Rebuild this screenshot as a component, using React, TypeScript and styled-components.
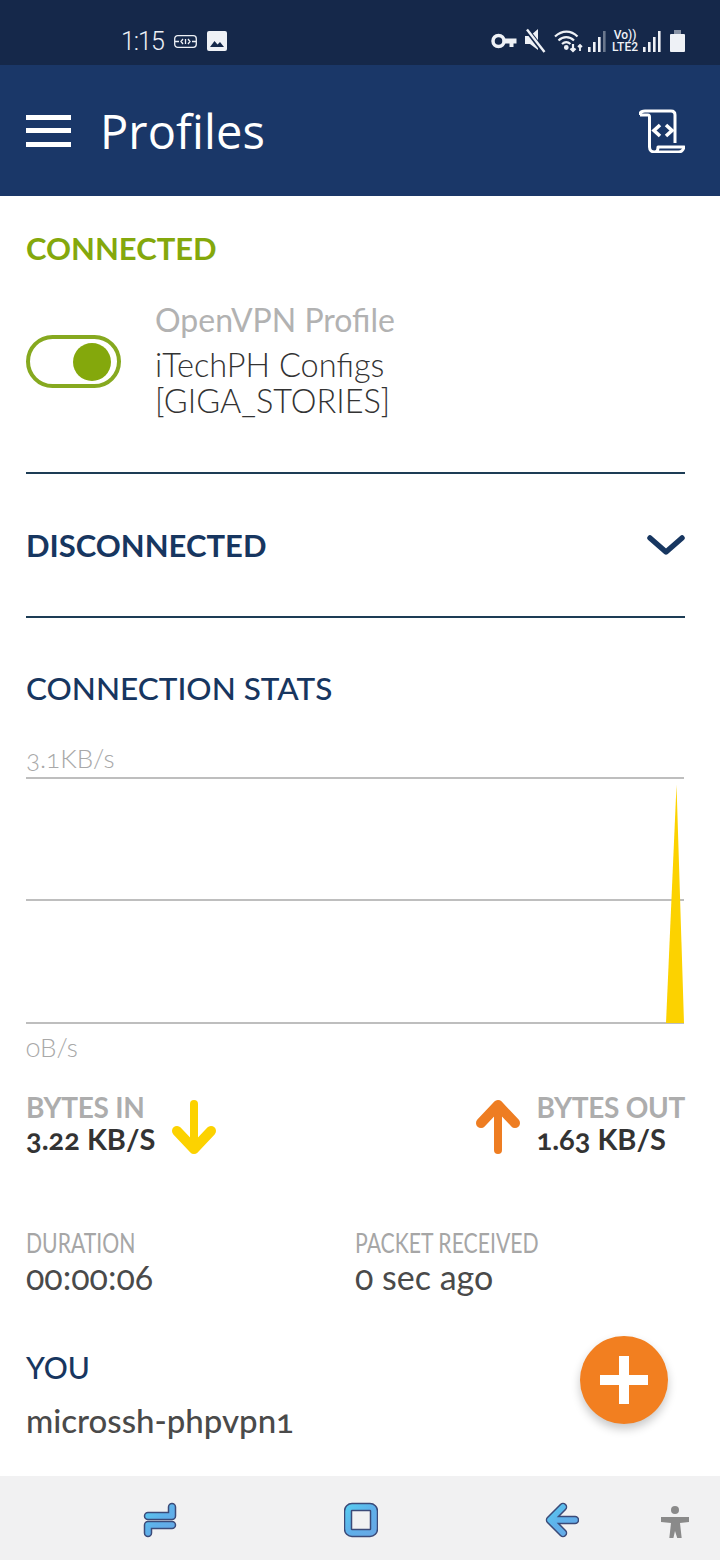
import React from "react";
import styled, { createGlobalStyle } from "styled-components";

const GlobalStyle = createGlobalStyle`
  html, body {
    margin: 0;
    padding: 0;
    background: #ffffff;
  }
  * {
    box-sizing: border-box;
  }
`;

const Page = styled.div`
  width: 720px;
  height: 1560px;
  display: flex;
  flex-direction: column;
  position: relative;
  overflow: hidden;
  background: #ffffff;
  font-family: Lato, "Open Sans", sans-serif;
  font-variant-numeric: oldstyle-nums;
`;

const StatusBar = styled.div`
  height: 65px;
  flex: none;
  display: flex;
  align-items: center;
  padding: 17px 35px 0 121px;
  background: #15284a;
  color: #eef1f6;
`;

const Clock = styled.span`
  font-family: Roboto, sans-serif;
  font-size: 25px;
  font-weight: 300;
  letter-spacing: -1px;
  font-variant-numeric: lining-nums;
`;

const StatusLeft = styled.div`
  display: flex;
  align-items: center;
  gap: 10px;
`;

const StatusRight = styled.div`
  margin-left: auto;
  display: flex;
  align-items: center;
`;

const StatusSlot = styled.span<{ $before: number }>`
  display: flex;
  margin-left: ${(p) => p.$before}px;
`;

const VolteText = styled.span`
  font-family: Roboto, sans-serif;
  font-size: 12px;
  line-height: 12px;
  font-weight: 500;
  text-align: center;
  font-variant-numeric: lining-nums;
`;

const Toolbar = styled.div`
  height: 131px;
  flex: none;
  display: flex;
  align-items: center;
  padding: 0 35px 0 26px;
  background: #1a3768;
  color: #ffffff;
`;

const Burger = styled.div`
  width: 45px;
  height: 32px;
  display: flex;
  flex-direction: column;
  justify-content: space-between;
  margin-right: 29px;
  span {
    height: 5px;
    background: #ffffff;
  }
`;

const Title = styled.h1`
  margin: 0;
  font-family: "Open Sans", sans-serif;
  font-size: 47px;
  font-weight: 500;
  letter-spacing: 0.1px;
`;

const ToolbarAction = styled.div`
  margin-left: auto;
  display: flex;
`;

const Content = styled.main`
  flex: 1;
  padding: 0 35px 0 26px;
  display: flex;
  flex-direction: column;
`;

const ConnectedHead = styled.h2`
  margin: 34px 0 36px;
  font-size: 31px;
  line-height: 36px;
  font-weight: 700;
  color: #84a80c;
`;

const ProfileRow = styled.div`
  display: flex;
  align-items: center;
`;

const Toggle = styled.div`
  width: 95px;
  height: 53px;
  flex: none;
  margin: 2px 35px 0 0;
  border: 4px solid #86a91f;
  border-radius: 27px;
  display: flex;
  align-items: center;
  justify-content: flex-end;
  padding-right: 6px;
`;

const ToggleKnob = styled.div`
  width: 38px;
  height: 38px;
  border-radius: 50%;
  background: #84a80c;
`;

const ProfileText = styled.div`
  display: flex;
  flex-direction: column;
  margin-left: -1px;
`;

const ProfileType = styled.div`
  font-size: 32px;
  line-height: 36px;
  font-weight: 400;
  color: #b2b2b2;
  margin-bottom: 9px;
`;

const ProfileName = styled.div`
  font-size: 32.5px;
  line-height: 36px;
  font-weight: 300;
  color: #333333;
`;

const Divider = styled.div<{ $top: number }>`
  height: 2px;
  flex: none;
  margin-top: ${(p) => p.$top}px;
  background: #1d3c55;
`;

const CollapseRow = styled.div`
  height: 142px;
  flex: none;
  display: flex;
  align-items: center;
  justify-content: space-between;
`;

const NavyHead = styled.h2`
  margin: 0;
  font-size: 31px;
  line-height: 36px;
  font-weight: 700;
  color: #173660;
`;

const StatsHead = styled.h3`
  margin: 52px 0 0;
  font-size: 31.500px;
  line-height: 36px;
  font-weight: 500;
  color: #173660;
`;

const AxisLabel = styled.div<{ $top: number }>`
  margin-top: ${(p) => p.$top}px;
  font-size: 26px;
  line-height: 28px;
  font-weight: 300;
  color: #a8a8a8;
`;

const Chart = styled.svg`
  display: block;
  width: 659px;
  height: 247px;
  flex: none;
  margin-top: 5px;
`;

const RateRow = styled.div`
  margin-top: 30px;
  display: flex;
  justify-content: space-between;
`;

const RateGroup = styled.div`
  display: flex;
  align-items: center;
  gap: 17px;
`;

const RateArrow = styled.svg`
  display: block;
  width: 44px;
  height: 54px;
  flex: none;
  margin-top: 8px;
`;

const RateLabel = styled.div`
  font-size: 28px;
  line-height: 32px;
  font-weight: 700;
  letter-spacing: -0.3px;
  color: #adadad;
`;

const RateValue = styled.div`
  font-size: 29px;
  line-height: 32px;
  font-weight: 700;
  color: #333333;
`;

const InfoRow = styled.div`
  margin-top: 72px;
  display: flex;
`;

const InfoCell = styled.div`
  width: 329px;
`;

const InfoLabel = styled.div`
  font-size: 27px;
  line-height: 32px;
  font-weight: 400;
  color: #a6a6a6;
  white-space: nowrap;
  transform: scaleX(0.785);
  transform-origin: left center;
`;

const InfoValue = styled.div`
  font-size: 34px;
  line-height: 36px;
  font-weight: 400;
  color: #4a4a4a;
`;

const YouHead = styled.h3`
  margin: 54px 0 0;
  font-size: 30px;
  line-height: 36px;
  font-weight: 500;
  color: #173660;
`;

const HostName = styled.div`
  margin-top: 17px;
  font-size: 33px;
  line-height: 36px;
  font-weight: 500;
  color: #4a4a4a;
`;

const Fab = styled.div`
  position: absolute;
  left: 580px;
  top: 1336px;
  width: 88px;
  height: 88px;
  border-radius: 50%;
  background: #f27f20;
  box-shadow: 0 5px 10px rgba(0, 0, 0, 0.22);
  display: flex;
  align-items: center;
  justify-content: center;
`;

const BottomNav = styled.nav`
  height: 84px;
  flex: none;
  display: flex;
  align-items: center;
  gap: 167px;
  padding: 4px 0 0 143px;
  background: #f1f1f2;
`;

const NavIcon = styled.svg<{ $shift?: number }>`
  display: block;
  width: 34px;
  height: 36px;
  flex: none;
  margin-left: ${(p) => p.$shift ?? 0}px;
`;

const KeyIcon = () => (
  <svg width="26" height="18" viewBox="0 0 26 18" fill="none">
    <circle cx="7.500" cy="9" r="5.500" stroke="#eef1f6" strokeWidth="3.500" />
    <path d="M13 6.500h12.500v5h-3v3.500h-4v-3.500H13z" fill="#eef1f6" />
  </svg>
);

const MuteIcon = () => (
  <svg width="22" height="26" viewBox="0 0 22 26">
    <path d="M1 8h5l8-7v21l-8-6H1z" fill="#eef1f6" />
    <path d="M3 2l17 22" stroke="#15284a" strokeWidth="5" />
    <path d="M3 1.500l17.500 22.500" stroke="#eef1f6" strokeWidth="2.400" />
  </svg>
);

const WifiIcon = () => (
  <svg width="29" height="24" viewBox="0 0 29 24" fill="none" stroke="#eef1f6" strokeWidth="2.200">
    <path d="M1 7.500C8 1 17 1 23.500 7.500" />
    <path d="M4.500 11.500C9 7 15.500 7 20 11.500" />
    <path d="M8 15c3-2.600 5.500-2.600 8.500 0" />
    <circle cx="12.300" cy="18.500" r="1.300" fill="#eef1f6" />
    <path d="M19 15v7M16.500 19.500l2.500 2.500 2.500-2.500" />
    <path d="M26 22v-6M24 18l2-2 2 2" strokeWidth="1.800" />
  </svg>
);

const SignalIcon = ({ dim }: { dim?: boolean }) => (
  <svg width="18" height="21" viewBox="0 0 18 21" fill="#eef1f6">
    <rect x="0" y="16" width="2.600" height="5" />
    <rect x="5" y="11" width="2.600" height="10" />
    <rect x="10" y="6" width="2.600" height="15" />
    <rect x="15" y="0" width="2.600" height="21" opacity={dim ? 0.4 : 1} />
  </svg>
);

const BatteryIcon = () => (
  <svg width="15" height="22" viewBox="0 0 15 22">
    <rect x="4" y="0" width="7" height="4" fill="#8893a6" />
    <rect x="0" y="4" width="15" height="18" rx="1" fill="#eef1f6" />
  </svg>
);

const ScrollIcon = () => (
  <svg width="46" height="44" viewBox="0 0 46 44" fill="none" stroke="#ffffff" strokeWidth="3" strokeLinejoin="round">
    <path d="M1 6c0-3 2-4 5-4h26c3 0 4 2 4 4v28" />
    <path d="M1 6h8c1 0 1.500 1 1.500 2v30c0 3 2 5 5 5h24c3 0 5-2.500 5.500-5H19c0 3-1 5-3.500 5" />
    <path d="M21 16l-6 5.500 6 5.500M27 16l6 5.500-6 5.500" strokeWidth="3.600" strokeLinejoin="miter" />
  </svg>
);

const NavStroke = ({ d }: { d: string }) => (
  <>
    <path d={d} stroke="#3b4a78" strokeWidth="8.500" strokeLinecap="round" strokeLinejoin="round" fill="none" />
    <path d={d} stroke="url(#navBlue)" strokeWidth="5.500" strokeLinecap="round" strokeLinejoin="round" fill="none" />
  </>
);

export default function App() {
  return (
    <Page>
      <GlobalStyle />
      <StatusBar>
        <StatusLeft>
          <Clock>1:15</Clock>
          <svg width="23" height="13" viewBox="0 0 23 13" fill="none" stroke="#eef1f6" strokeWidth="1.300">
            <rect x="0.700" y="0.700" width="21.600" height="11.600" rx="3" />
            <path d="M1 6.500h4M18 6.500h4M9 4L7 6.500 9 9M14 4l2 2.500L14 9M11.500 4v5" />
          </svg>
          <svg width="20" height="20" viewBox="0 0 20 20">
            <rect width="20" height="20" rx="2" fill="#eef1f6" />
            <path d="M3 16l4.500-6 3 3.500 2.500-2.500 4 5z" fill="#15284a" />
          </svg>
        </StatusLeft>
        <StatusRight>
          <StatusSlot $before={0}>
            <KeyIcon />
          </StatusSlot>
          <StatusSlot $before={7}>
            <MuteIcon />
          </StatusSlot>
          <StatusSlot $before={8}>
            <WifiIcon />
          </StatusSlot>
          <StatusSlot $before={5}>
            <SignalIcon dim />
          </StatusSlot>
          <StatusSlot $before={6}>
            <VolteText>
              Vo))
              <br />
              LTE2
            </VolteText>
          </StatusSlot>
          <StatusSlot $before={5}>
            <SignalIcon />
          </StatusSlot>
          <StatusSlot $before={9}>
            <BatteryIcon />
          </StatusSlot>
        </StatusRight>
      </StatusBar>

      <Toolbar>
        <Burger>
          <span />
          <span />
          <span />
        </Burger>
        <Title>Profiles</Title>
        <ToolbarAction>
          <ScrollIcon />
        </ToolbarAction>
      </Toolbar>

      <Content>
        <ConnectedHead>CONNECTED</ConnectedHead>
        <ProfileRow>
          <Toggle>
            <ToggleKnob />
          </Toggle>
          <ProfileText>
            <ProfileType>OpenVPN Profile</ProfileType>
            <ProfileName>
              iTechPH Configs
              <br />
              [GIGA_STORIES]
            </ProfileName>
          </ProfileText>
        </ProfileRow>
        <Divider $top={53} />
        <CollapseRow>
          <NavyHead>DISCONNECTED</NavyHead>
          <svg width="38" height="22" viewBox="0 0 38 22" fill="none" stroke="#173660" strokeWidth="5.500" strokeLinecap="round" strokeLinejoin="round">
            <path d="M3 4L19 18 35 4" />
          </svg>
        </CollapseRow>
        <Divider $top={0} />
        <StatsHead>CONNECTION STATS</StatsHead>
        <AxisLabel $top={38}>3.1KB/s</AxisLabel>
        <Chart viewBox="0 0 659 247">
          <path d="M0 1h658M0 123h658M0 246h658" stroke="#a9a9a9" strokeWidth="1.600" fill="none" />
          <path d="M640 246L650.500 8 658 246z" fill="#fcd200" />
        </Chart>
        <AxisLabel $top={9}>0B/s</AxisLabel>
        <RateRow>
          <RateGroup>
            <div>
              <RateLabel>BYTES IN</RateLabel>
              <RateValue>3.22 KB/S</RateValue>
            </div>
            <RateArrow viewBox="0 0 44 54" fill="none" stroke="#fcd200" strokeLinecap="round" strokeLinejoin="round">
              <path d="M22 4v44" strokeWidth="8" />
              <path d="M5 31l17 18 17-18" strokeWidth="10" />
            </RateArrow>
          </RateGroup>
          <RateGroup>
            <RateArrow viewBox="0 0 44 54" fill="none" stroke="#ee7d22" strokeLinecap="round" strokeLinejoin="round">
              <path d="M22 50V6" strokeWidth="8" />
              <path d="M5 23L22 5l17 18" strokeWidth="10" />
            </RateArrow>
            <div>
              <RateLabel>BYTES OUT</RateLabel>
              <RateValue>1.63 KB/S</RateValue>
            </div>
          </RateGroup>
        </RateRow>
        <InfoRow>
          <InfoCell>
            <InfoLabel>DURATION</InfoLabel>
            <InfoValue>00:00:06</InfoValue>
          </InfoCell>
          <InfoCell>
            <InfoLabel>PACKET RECEIVED</InfoLabel>
            <InfoValue>0 sec ago</InfoValue>
          </InfoCell>
        </InfoRow>
        <YouHead>YOU</YouHead>
        <HostName>microssh-phpvpn1</HostName>
      </Content>

      <Fab>
        <svg width="48" height="48" viewBox="0 0 48 48" fill="#ffffff">
          <path d="M19 0h10v19h19v10H29v19H19V29H0V19h19z" />
        </svg>
      </Fab>

      <BottomNav>
        <NavIcon viewBox="0 0 34 36" fill="none">
          <defs>
            <linearGradient id="navBlue" gradientUnits="userSpaceOnUse" x1="0" y1="0" x2="34" y2="36">
              <stop offset="0" stopColor="#55d2f2" />
              <stop offset="0.500" stopColor="#5fb0ea" />
              <stop offset="1" stopColor="#6aa6e4" />
            </linearGradient>
          </defs>
          <NavStroke d="M29 5v9H5" />
          <NavStroke d="M29 23H5v8" />
        </NavIcon>
        <NavIcon viewBox="0 0 34 36" fill="none">
          <NavStroke d="M8 5h18a4 4 0 0 1 4 4v18a4 4 0 0 1-4 4H8a4 4 0 0 1-4-4V9a4 4 0 0 1 4-4z" />
        </NavIcon>
        <NavIcon viewBox="0 0 34 36" fill="none">
          <NavStroke d="M18 5L5 18l13 13M5 18h25" />
        </NavIcon>
        <NavIcon viewBox="0 0 34 36" fill="#8a8a8a" $shift={-88}>
          <circle cx="17" cy="8" r="4" />
          <path d="M3 15h28v5l-9 1 2 18-3.500 1L17 29l-2.500 11-3.500-1 2-18-10-1z" />
        </NavIcon>
      </BottomNav>
    </Page>
  );
}
